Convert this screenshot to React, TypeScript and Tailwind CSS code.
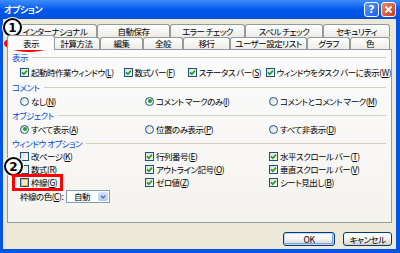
import React from "react"

const topTabs = [
  { label: "インターナショナル", w: "w-[84px]" },
  { label: "自動保存", w: "w-[73px]" },
  { label: "エラー チェック", w: "w-[75px]" },
  { label: "スペル チェック", w: "w-[78px]" },
  { label: "セキュリティ", w: "w-[67px]" },
]

const bottomTabs = [
  { label: "計算方法", w: "w-[47px]" },
  { label: "編集", w: "w-[43px]" },
  { label: "全般", w: "w-[40px]" },
  { label: "移行", w: "w-[47px]" },
  { label: "ユーザー設定リスト", w: "w-[77px]" },
  { label: "グラフ", w: "w-[43px]" },
  { label: "色", w: "w-[40px]" },
]

function Label({ text, k }: { text: string; k: string }) {
  return (
    <span className="whitespace-nowrap">
      {text}(<span className="underline">{k}</span>)
    </span>
  )
}

function Check({ checked = false, hot = false }: { checked?: boolean; hot?: boolean }) {
  return (
    <span className="flex h-[9px] w-[9px] shrink-0 items-center justify-center border border-[#1C5180] bg-gradient-to-br from-[#DCDCD7] to-white">
      {hot && <span className="h-[7px] w-[7px] border border-[#F8B636] bg-[#FCE7B5]" />}
      {checked && (
        <svg viewBox="0 0 7 7" className="h-[7px] w-[7px]">
          <path d="M1 3.3 L2.8 5.2 L6 1.6" stroke="#21A121" strokeWidth="1.7" fill="none" />
        </svg>
      )}
    </span>
  )
}

function Radio({ checked = false }: { checked?: boolean }) {
  return (
    <span className="flex h-[9px] w-[9px] shrink-0 items-center justify-center rounded-full border border-[#1C5180] bg-gradient-to-br from-[#DCDCD7] to-white">
      {checked && <span className="h-[4px] w-[4px] rounded-full bg-[#21A121]" />}
    </span>
  )
}

function CheckItem({ text, k, checked, hot, className = "" }: { text: string; k: string; checked?: boolean; hot?: boolean; className?: string }) {
  return (
    <div className={`flex items-center gap-[2px] ${className}`}>
      <Check checked={checked} hot={hot} />
      <Label text={text} k={k} />
    </div>
  )
}

function RadioItem({ text, k, checked }: { text: string; k: string; checked?: boolean }) {
  return (
    <div className="flex items-center gap-[2px]">
      <Radio checked={checked} />
      <Label text={text} k={k} />
    </div>
  )
}

function Section({ title }: { title: string }) {
  return (
    <div className="flex h-[14px] items-center pl-[4px] pr-[5px]">
      <span className="text-[#0046D5]">{title}</span>
      <span className="ml-[4px] h-px flex-1 bg-[#D0D0BF]" />
    </div>
  )
}

function XpButton({ children, focused = false }: { children: React.ReactNode; focused?: boolean }) {
  return (
    <div
      className={`flex h-[14px] items-center justify-center rounded-[3px] border border-[#003C74] bg-gradient-to-b from-white via-[#F4F4F0] to-[#D6D0C5] ${
        focused ? "w-[52px] shadow-[inset_0_0_0_1px_#BCD4F6,inset_-1px_-1px_0_1px_#7BA2E7]" : "w-[49px]"
      }`}
    >
      {children}
    </div>
  )
}

function Circled({ n }: { n: string }) {
  return (
    <div className="flex h-[19px] w-[19px] items-center justify-center rounded-full border-[2.5px] border-black bg-white shadow-[0_0_0_1px_white] font-['DejaVu_Sans',sans-serif] text-[12px] font-bold tracking-normal leading-none">
      {n}
    </div>
  )
}

export default function App() {
  return (
    <div className="relative h-[253px] w-[400px] overflow-hidden bg-[#0054E3] font-['Noto_Sans_CJK_JP',sans-serif] text-[8.5px] leading-none tracking-[-0.5px] text-black [font-feature-settings:'palt']">
      {/* title bar */}
      <div className="flex h-[19px] items-center justify-between bg-gradient-to-b from-[#3D8DFB] via-[#0058EE] to-[#0150DC] pl-[4px] pr-[4px]">
        <span className="text-[9px] font-bold text-white">オプション</span>
        <div className="flex gap-[2px]">
          <div className="flex h-[15px] w-[15px] items-center justify-center rounded-[3px] border border-white bg-gradient-to-br from-[#5A9BFF] to-[#1A5CE0] font-['DejaVu_Sans',sans-serif] text-[11px] font-bold tracking-normal text-white">
            ?
          </div>
          <div className="flex h-[15px] w-[15px] items-center justify-center rounded-[3px] border border-white bg-gradient-to-br from-[#E9876B] to-[#C7391A]">
            <svg viewBox="0 0 9 9" className="h-[9px] w-[9px]">
              <path d="M1.5 1.5 L7.5 7.5 M7.5 1.5 L1.5 7.5" stroke="white" strokeWidth="1.8" />
            </svg>
          </div>
        </div>
      </div>

      {/* body */}
      <div className="ml-[3px] mr-[4px] flex h-[230px] flex-col bg-[#ECE9D8]">
        <div className="ml-[10px] mt-[5px] flex h-[13px]">
          {topTabs.map((t) => (
            <div
              key={t.label}
              className={`${t.w} flex items-center justify-center whitespace-nowrap rounded-t-[3px] border border-b-0 border-[#919B9C] bg-gradient-to-b from-white to-[#ECEBE6]`}
            >
              {t.label}
            </div>
          ))}
        </div>
        <div className="ml-[4px] flex h-[12px] items-end">
          <div className="relative z-10 -mb-px -mr-[2px] flex h-[15px] w-[48px] items-center justify-center rounded-t-[3px] border border-b-0 border-[#919B9C] bg-[#FCFCFE]">
            表示
          </div>
          {bottomTabs.map((t) => (
            <div
              key={t.label}
              className={`${t.w} flex h-[12px] items-center justify-center whitespace-nowrap rounded-t-[3px] border border-b-0 border-[#919B9C] bg-gradient-to-b from-white to-[#ECEBE6]`}
            >
              {t.label}
            </div>
          ))}
        </div>

        {/* panel */}
        <div className="ml-[4px] h-[174px] w-[385px] border border-[#919B9C] bg-gradient-to-b from-[#FCFCFE] to-[#F4F3EE]">
          <Section title="表示" />
          <div className="mt-[1px] flex h-[14px] items-center pl-[12px]">
            <CheckItem className="w-[105px]" text="起動時作業ウィンドウ" k="L" checked />
            <CheckItem className="w-[65px]" text="数式バー" k="F" checked />
            <CheckItem className="w-[79px]" text="ステータス バー" k="S" checked />
            <CheckItem text="ウィンドウをタスク バーに表示" k="W" checked />
          </div>
          <div className="mt-[1px]">
            <Section title="コメント" />
          </div>
          <div className="grid h-[14px] grid-cols-[125px_124px_1fr] items-center pl-[12px]">
            <RadioItem text="なし" k="N" />
            <RadioItem text="コメント マークのみ" k="I" checked />
            <RadioItem text="コメントとコメント マーク" k="M" />
          </div>
          <Section title="オブジェクト" />
          <div className="grid h-[14px] grid-cols-[125px_124px_1fr] items-center pl-[12px]">
            <RadioItem text="すべて表示" k="A" checked />
            <RadioItem text="位置のみ表示" k="P" />
            <RadioItem text="すべて非表示" k="D" />
          </div>
          <Section title="ウィンドウ オプション" />
          <div className="grid grid-cols-[125px_124px_1fr] grid-rows-[13px_13px_13px] items-center pl-[12px]">
            <CheckItem text="改ページ" k="K" />
            <CheckItem text="行列番号" k="E" checked />
            <CheckItem text="水平スクロール バー" k="T" checked />
            <CheckItem text="数式" k="R" />
            <CheckItem text="アウトライン記号" k="O" checked />
            <CheckItem text="垂直スクロール バー" k="V" checked />
            <CheckItem text="枠線" k="G" hot />
            <CheckItem text="ゼロ値" k="Z" checked />
            <CheckItem text="シート見出し" k="B" checked />
          </div>
          <div className="flex h-[15px] items-center pl-[12px]">
            <span className="w-[46px] whitespace-nowrap">
              <Label text="枠線の色" k="C" />:
            </span>
            <div className="flex h-[13px] w-[44px] items-stretch border border-[#7F9DB9] bg-white">
              <span className="flex flex-1 items-center pl-[7px]">自動</span>
              <span className="m-px flex w-[10px] items-center justify-center rounded-[2px] bg-gradient-to-b from-[#D6E3FD] to-[#B4C8F6]">
                <svg viewBox="0 0 7 5" className="h-[4px] w-[6px]">
                  <path d="M0.8 0.8 L3.5 3.6 L6.2 0.8" stroke="#4D6185" strokeWidth="1.5" fill="none" />
                </svg>
              </span>
            </div>
          </div>
        </div>

        {/* buttons */}
        <div className="mt-[9px] flex justify-end gap-[8px] pr-[4px]">
          <XpButton focused>OK</XpButton>
          <XpButton>キャンセル</XpButton>
        </div>
      </div>

      {/* annotations */}
      <div className="absolute left-[3px] top-[18px]">
        <Circled n="1" />
      </div>
      <div className="absolute left-[4px] top-[35px] h-[17px] w-[50px] rounded-[50%] border-[3px] border-[#FF0000]" />
      <div className="absolute left-[4px] top-[157px]">
        <Circled n="2" />
      </div>
      <div className="absolute left-[12px] top-[174px] h-[17px] w-[51px] border-[3px] border-[#FF0000]" />
    </div>
  )
}
